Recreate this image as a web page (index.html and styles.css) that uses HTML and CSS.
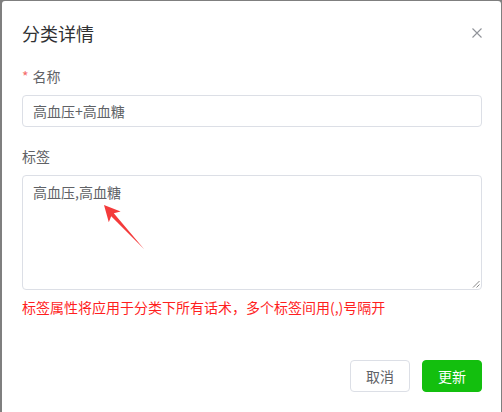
FILE: index.html
```html
<!DOCTYPE html>
<html lang="zh-CN">
<head>
<meta charset="utf-8">
<title>分类详情</title>
<link rel="stylesheet" href="styles.css">
</head>
<body>
<div class="dialog">
  <div class="dialog-header">
    <span class="dialog-title">分类详情</span>
    <button class="dialog-close" aria-label="关闭">
      <svg width="10" height="10" viewBox="0 0 10 10"><path d="M0.5 0.5 L9.5 9.5 M9.5 0.5 L0.5 9.5" stroke="#909399" stroke-width="1.1" fill="none"/></svg>
    </button>
  </div>
  <div class="dialog-body">
    <div class="field-label"><span class="required">*</span>名称</div>
    <div class="text-input">高血压+高血糖</div>
    <div class="field-label second">标签</div>
    <div class="text-area">高血压,高血糖
      <svg class="grip" width="8" height="8" viewBox="0 0 8 8"><path d="M7.5 1 L1 7.5 M7.5 4.5 L4.5 7.5" stroke="#888" stroke-width="1" fill="none"/></svg>
      <svg class="arrow" width="60" height="60" viewBox="0 0 60 60"><polygon points="3,3 19.6,9.4 12.8,11.2 43,47 10.2,14.2 7.8,20.2" fill="#f43b3b"/></svg>
    </div>
    <div class="hint">标签属性将应用于分类下所有话术，多个标签间用(,)号隔开</div>
  </div>
  <div class="dialog-footer">
    <button class="btn btn-default">取消</button>
    <button class="btn btn-primary">更新</button>
  </div>
</div>
</body>
</html>
```
FILE: styles.css
```css
html, body {
  margin: 0;
  padding: 0;
  height: 100%;
  overflow: hidden;
}
body {
  background: #7f7f7f;
  font-family: "Noto Sans CJK SC", "Noto Sans", "Liberation Sans", sans-serif;
}
.dialog {
  margin: 1px 0 0 2px;
  width: 499px;
  height: 430px;
  box-sizing: border-box;
  background: #fff;
  border-radius: 3px 3px 0 0;
  padding: 0 19px 0 20px;
}
.dialog-header {
  position: relative;
  padding: 20px 0 10px;
}
.dialog-title {
  display: block;
  font-size: 18px;
  line-height: 24px;
  color: #303133;
}
.dialog-close {
  position: absolute;
  top: 26px;
  right: 0px;
  width: 12px;
  height: 12px;
  padding: 0 0 0 1px;
  border: 0;
  background: none;
  line-height: 0;
}
.dialog-body {
  padding-top: 11px;
}
.field-label {
  font-size: 14px;
  line-height: 20px;
  color: #606266;
  margin-bottom: 9px;
}
.field-label.second {
  margin-top: 19px;
}
.required {
  color: #f56c6c;
  margin-right: 4px;
}
.text-input {
  height: 32px;
  box-sizing: border-box;
  border: 1px solid #dcdfe6;
  border-radius: 4px;
  padding: 0 10px;
  font-size: 14px;
  line-height: 30px;
  color: #606266;
}
.text-area {
  position: relative;
  height: 115px;
  box-sizing: border-box;
  border: 1px solid #dcdfe6;
  border-radius: 4px;
  padding: 6px 10px;
  font-size: 14px;
  line-height: 21px;
  color: #606266;
}
.grip {
  position: absolute;
  right: 1px;
  bottom: 1px;
}
.arrow {
  position: absolute;
  left: 78px;
  top: 26px;
}
.hint {
  margin-top: 7px;
  font-size: 14px;
  line-height: 20px;
  color: #ff1f1f;
}
.dialog-footer {
  margin-top: 43px;
  display: flex;
  justify-content: flex-end;
  gap: 12px;
}
.btn {
  width: 60px;
  height: 32px;
  box-sizing: border-box;
  border-radius: 4px;
  font-family: inherit;
  font-size: 14px;
  padding: 0;
}
.btn-default {
  background: #fff;
  border: 1px solid #dcdfe6;
  color: #606266;
}
.btn-primary {
  background: #13bf0e;
  border: 1px solid #13bf0e;
  color: #fff;
}
```
